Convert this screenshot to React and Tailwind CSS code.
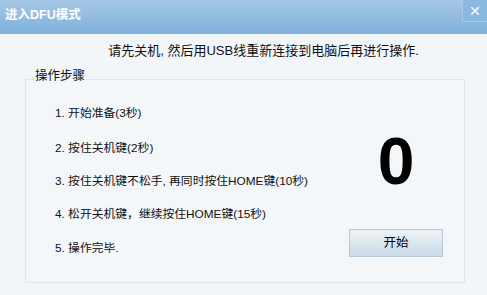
import React from 'react';

const steps = [
  '1. 开始准备(3秒)',
  '2. 按住关机键(2秒)',
  '3. 按住关机键不松手, 再同时按住HOME键(10秒)',
  '4. 松开关机键，继续按住HOME键(15秒)',
  '5. 操作完毕.',
];

const App = () => {
  return (
    <div
      className="w-[487px] h-[295px] overflow-hidden bg-[#f3f6f9] text-[#111] flex flex-col"
      style={{ fontFamily: '"Liberation Sans", "Noto Sans CJK SC", sans-serif' }}
    >
      {/* title bar */}
      <div className="h-[34px] flex items-start justify-between bg-gradient-to-b from-[#a6c8e6] to-[#7fb1da] border-b border-[#8db6da]">
        <div className="pl-[5px] pt-[9px] text-[12.5px] font-bold text-white leading-none">进入DFU模式</div>
        <div className="w-[25px] h-[22px] bg-[#8ab8de] border-l border-b border-[#a9cbe8] flex items-center justify-center text-white text-[14px] leading-none">
          ✕
        </div>
      </div>

      <div className="flex-1 flex flex-col">
        <div className="h-[34px] flex items-center justify-center pl-[40px] text-[13px]">
          请先关机, 然后用USB线重新连接到电脑后再进行操作.
        </div>

        {/* group box */}
        <div className="relative mx-[25px] mt-[11px] h-[204px] w-[440px] border border-[#dfe5ec] bg-[#f4f7fa]">
          <div className="absolute left-[8px] top-[-10px] px-[1px] bg-[#f3f6f9] text-[12.5px] leading-none">操作步骤</div>
          <div className="flex h-full">
            <div className="flex-1 flex flex-col pl-[29px] pt-[27px] text-[11.8px] leading-[13px]">
              <div>{steps[0]}</div>
              <div className="mt-[22px]">{steps[1]}</div>
              <div className="mt-[20px]">{steps[2]}</div>
              <div className="mt-[20px]">{steps[3]}</div>
              <div className="mt-[21px]">{steps[4]}</div>
            </div>
            <div className="w-[115px] flex flex-col items-center pt-[48px] pr-[21px]">
              <div className="text-[66px] font-bold leading-none text-black">0</div>
              <button className="mt-[35px] w-[94px] h-[28px] border border-[#b8c8d6] bg-gradient-to-b from-[#eef3f7] to-[#c9dae6] text-[12.5px] text-black">
                开始
              </button>
            </div>
          </div>
        </div>
      </div>
    </div>
  );
};

export default App;
